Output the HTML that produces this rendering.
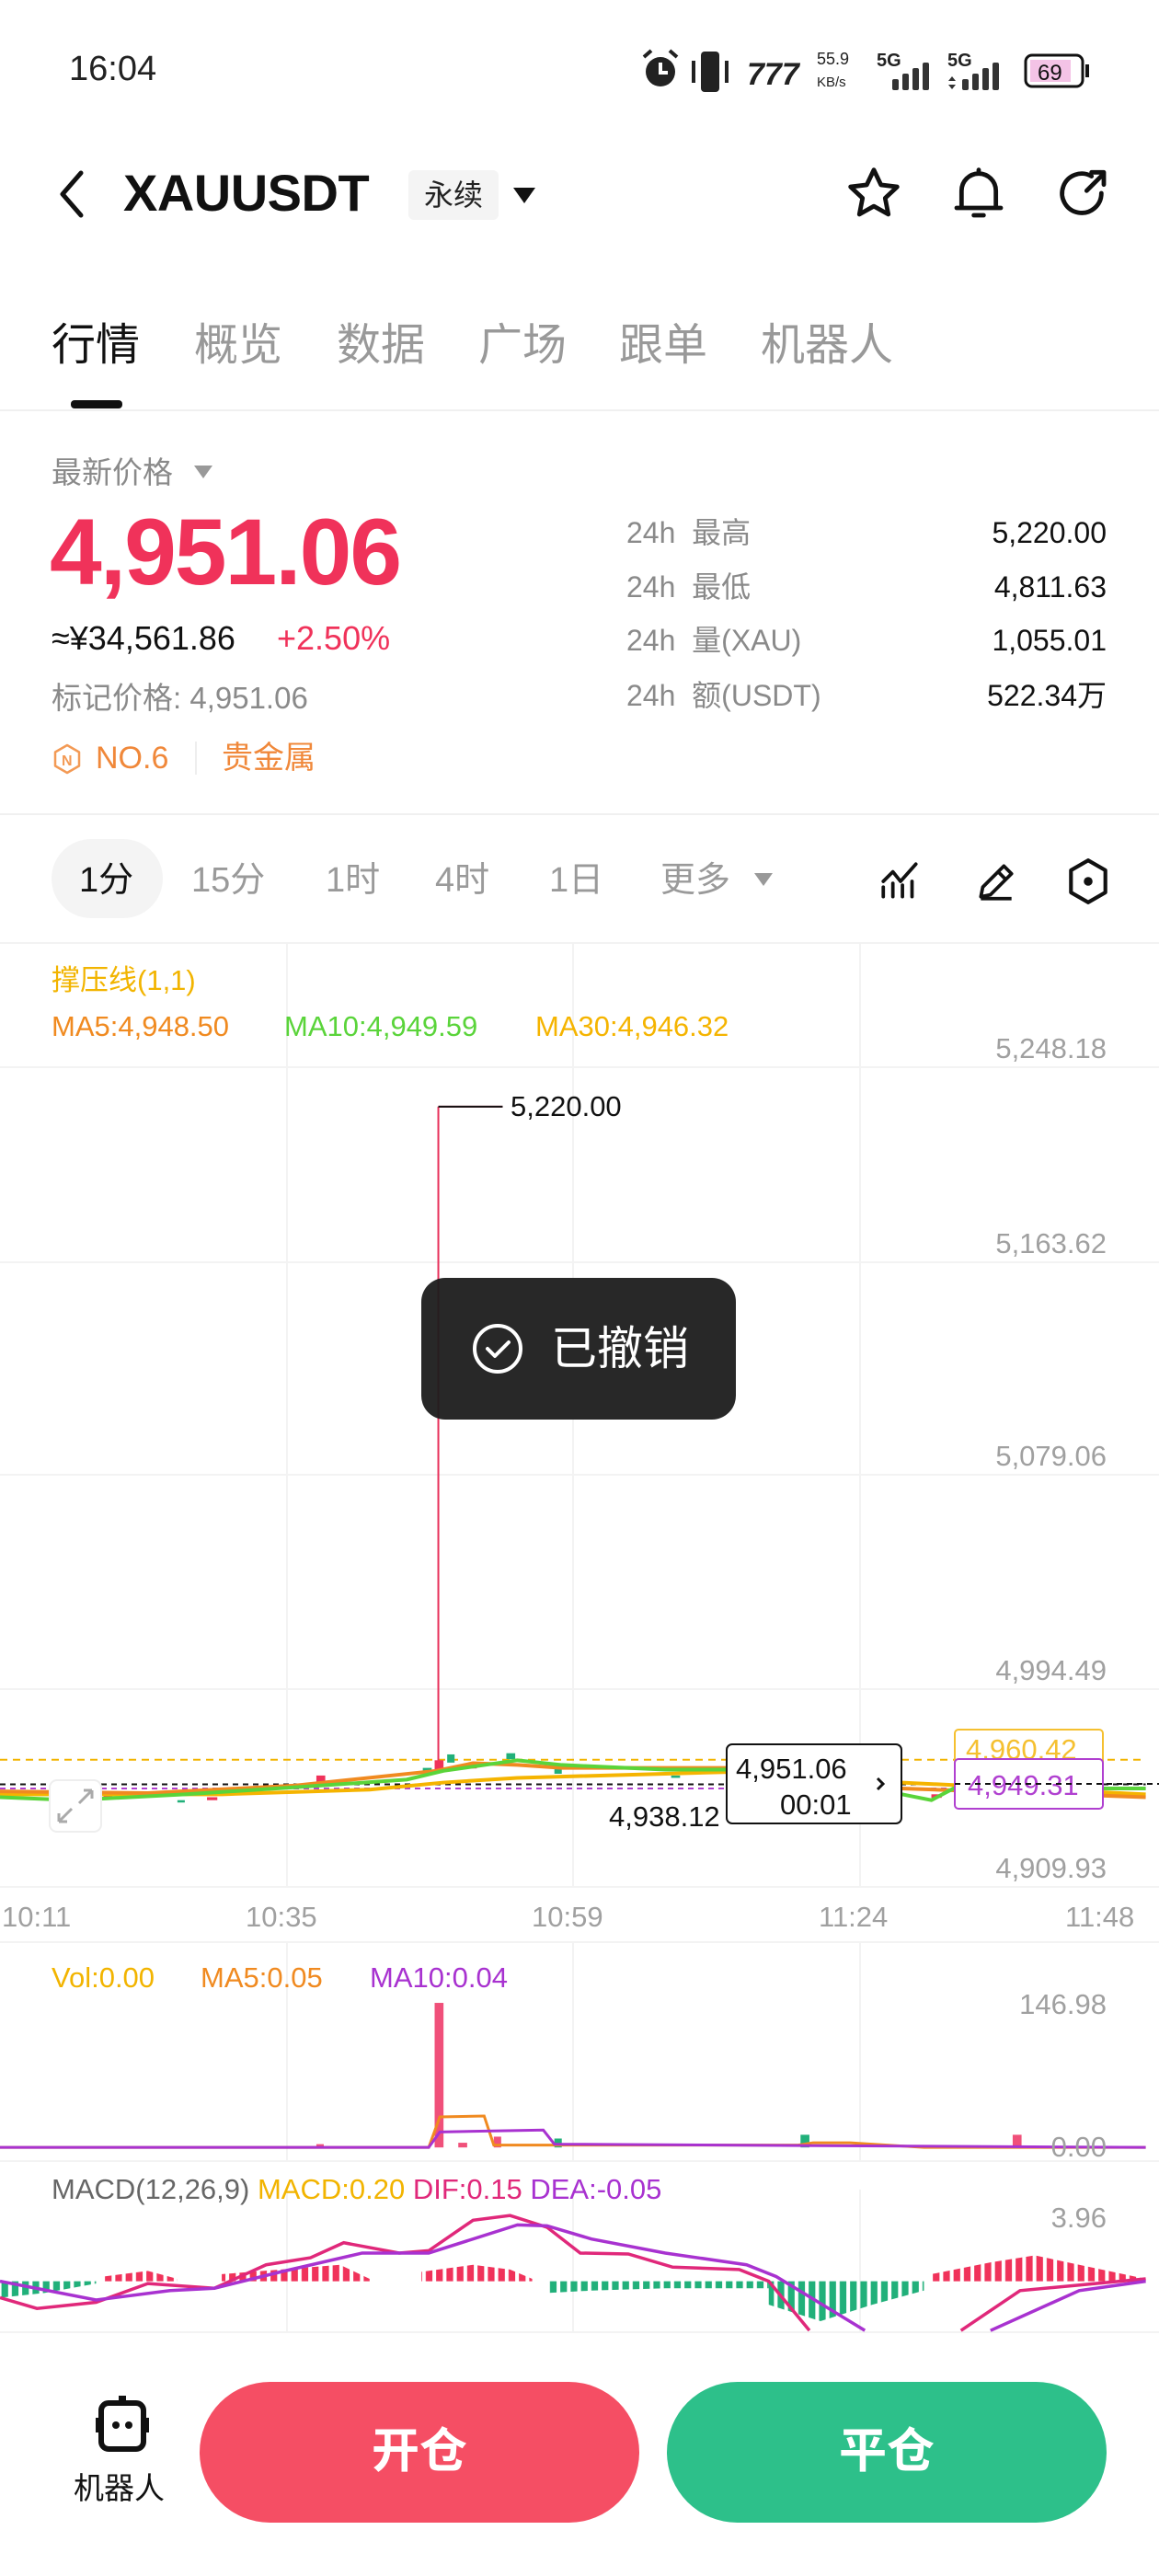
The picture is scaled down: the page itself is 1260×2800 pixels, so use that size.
<!DOCTYPE html>
<html><head><meta charset="utf-8">
<style>
*{margin:0;padding:0;box-sizing:border-box}
body{width:1260px;height:2800px;background:#fff;position:relative;overflow:hidden;font-family:"Liberation Sans","Noto Sans CJK SC",sans-serif;color:#111}
.a{position:absolute;white-space:nowrap}
.g{color:#8a8a8a}
.tab{position:absolute;top:346px;font-size:48px;color:#999;line-height:60px}
.lab{position:absolute;left:681px;font-size:32px;color:#8a8a8a;line-height:40px}
.val{position:absolute;right:57px;font-size:32px;color:#111;line-height:40px;text-align:right}
.tf{position:absolute;top:935px;font-size:38px;color:#9a9a9a;line-height:44px}
.yl{position:absolute;right:57px;font-size:31px;color:#a0a0a0;line-height:36px}
.xl{position:absolute;top:2066px;font-size:31px;color:#a0a0a0;line-height:36px}
</style></head><body>

<!-- status bar -->
<div class="a" style="left:75px;top:52px;font-size:38px;color:#222;line-height:46px">16:04</div>
<svg class="a" style="left:690px;top:50px" width="500" height="56" viewBox="690 50 500 56">
 <circle cx="718" cy="78" r="16" fill="#222"/><path d="M718 68v11h8" stroke="#fff" stroke-width="4" fill="none"/>
 <path d="M700 62l8-7M736 62l-8-7" stroke="#222" stroke-width="4"/>
 <rect x="762" y="56" width="20" height="44" rx="4" fill="#222"/><path d="M754 66v24M790 66v24" stroke="#222" stroke-width="4"/>
 <text x="812" y="92" font-family="Liberation Sans" font-style="italic" font-weight="bold" font-size="34" fill="#222">777</text>
 <text x="888" y="70" font-family="Liberation Sans" font-size="18" fill="#222">55.9</text>
 <text x="888" y="94" font-family="Liberation Sans" font-size="15" fill="#222">KB/s</text>
 <text x="953" y="72" font-family="Liberation Sans" font-weight="bold" font-size="20" fill="#222">5G</text>
 <rect x="970" y="86" width="7" height="12" rx="2" fill="#333"/><rect x="981" y="80" width="7" height="18" rx="2" fill="#333"/><rect x="992" y="74" width="7" height="24" rx="2" fill="#333"/><rect x="1003" y="68" width="7" height="30" rx="2" fill="#333"/>
 <text x="1030" y="72" font-family="Liberation Sans" font-weight="bold" font-size="20" fill="#222">5G</text>
 <path d="M1031 88l4-5 4 5zM1031 92l4 5 4-5z" fill="#333"/>
 <rect x="1046" y="86" width="7" height="12" rx="2" fill="#333"/><rect x="1057" y="80" width="7" height="18" rx="2" fill="#333"/><rect x="1068" y="74" width="7" height="24" rx="2" fill="#333"/><rect x="1079" y="68" width="7" height="30" rx="2" fill="#333"/>
 <rect x="1115" y="60" width="62" height="34" rx="7" fill="none" stroke="#111" stroke-width="3"/>
 <rect x="1120" y="65" width="44" height="24" fill="#f4c3e6"/>
 <rect x="1180" y="70" width="4" height="14" fill="#111"/>
 <text x="1128" y="87" font-family="Liberation Sans" font-size="24" fill="#111">69</text>
</svg>

<!-- header -->
<svg class="a" style="left:58px;top:182px" width="40" height="58"><path d="M30 6L10 29l20 23" stroke="#111" stroke-width="5" fill="none" stroke-linecap="round" stroke-linejoin="round"/></svg>
<div class="a" style="left:134px;top:178px;font-size:56px;font-weight:bold;line-height:64px;letter-spacing:-0.5px">XAUUSDT</div>
<div class="a" style="left:444px;top:185px;width:98px;height:54px;background:#f4f4f4;border-radius:6px;font-size:32px;line-height:54px;text-align:center;color:#222">永续</div>
<svg class="a" style="left:557px;top:203px" width="26" height="20"><path d="M1 1h24L13 18z" fill="#111"/></svg>
<svg class="a" style="left:918px;top:178px" width="64" height="64" viewBox="0 0 24 24"><path d="M12 2.5l2.9 6.1 6.6.8-4.9 4.6 1.3 6.6L12 17.3l-5.9 3.3 1.3-6.6-4.9-4.6 6.6-.8z" fill="none" stroke="#111" stroke-width="1.8" stroke-linejoin="round"/></svg>
<svg class="a" style="left:1032px;top:178px" width="64" height="64" viewBox="0 0 24 24"><path d="M5 18V11a7 7 0 0114 0v7M3 18h18M12 2.5v1.5M10 21h4" fill="none" stroke="#111" stroke-width="1.8" stroke-linecap="round"/></svg>
<svg class="a" style="left:1144px;top:178px" width="64" height="64" viewBox="0 0 24 24"><path d="M20 12a8 8 0 11-4-6.9M14 11l7-7M16 3.5h5v5" fill="none" stroke="#111" stroke-width="1.8" stroke-linecap="round" stroke-linejoin="round"/></svg>

<!-- tabs -->
<div class="tab" style="left:56px;color:#111">行情</div>
<div class="tab" style="left:211px">概览</div>
<div class="tab" style="left:366px">数据</div>
<div class="tab" style="left:520px">广场</div>
<div class="tab" style="left:673px">跟单</div>
<div class="tab" style="left:827px">机器人</div>
<div class="a" style="left:77px;top:435px;width:56px;height:9px;background:#111;border-radius:4px"></div>
<div class="a" style="left:0;top:445px;width:1260px;height:2px;background:#f0f0f0"></div>

<!-- price -->
<div class="a g" style="left:56px;top:494px;font-size:33px;line-height:40px">最新价格</div>
<svg class="a" style="left:210px;top:505px" width="22" height="16"><path d="M1 1h20L11 15z" fill="#999"/></svg>
<div class="a" style="left:54px;top:540px;font-size:102px;font-weight:bold;color:#f0325a;line-height:120px;letter-spacing:-2px">4,951.06</div>
<div class="a" style="left:56px;top:672px;font-size:36px;line-height:44px;color:#111">≈¥34,561.86</div>
<div class="a" style="left:301px;top:672px;font-size:36px;line-height:44px;color:#f0325a">+2.50%</div>
<div class="a g" style="left:56px;top:738px;font-size:33px;line-height:42px">标记价格: 4,951.06</div>
<svg class="a" style="left:57px;top:808px" width="32" height="34" viewBox="0 0 32 34"><path d="M16 2l13 7.5v15L16 32 3 24.5v-15z" fill="none" stroke="#f39a55" stroke-width="2.5" stroke-linejoin="round"/><text x="10" y="24" font-family="Liberation Sans" font-size="16" font-weight="bold" fill="#f39a55">N</text></svg>
<div class="a" style="left:104px;top:803px;font-size:34px;line-height:42px;color:#f0883a">NO.6</div>
<div class="a" style="left:212px;top:806px;width:2px;height:36px;background:#eee"></div>
<div class="a" style="left:241px;top:803px;font-size:34px;line-height:42px;color:#f0883a">贵金属</div>

<div class="lab" style="top:559px">24h&nbsp;&nbsp;最高</div><div class="val" style="top:559px">5,220.00</div>
<div class="lab" style="top:618px">24h&nbsp;&nbsp;最低</div><div class="val" style="top:618px">4,811.63</div>
<div class="lab" style="top:676px">24h&nbsp;&nbsp;量(XAU)</div><div class="val" style="top:676px">1,055.01</div>
<div class="lab" style="top:736px">24h&nbsp;&nbsp;额(USDT)</div><div class="val" style="top:736px">522.34万</div>

<div class="a" style="left:0;top:884px;width:1260px;height:2px;background:#f0f0f0"></div>

<!-- timeframes -->
<div class="a" style="left:56px;top:912px;width:121px;height:86px;background:#f4f4f4;border-radius:43px"></div>
<div class="tf" style="left:86px;color:#111">1分</div>
<div class="tf" style="left:208px">15分</div>
<div class="tf" style="left:354px">1时</div>
<div class="tf" style="left:473px">4时</div>
<div class="tf" style="left:597px">1日</div>
<div class="tf" style="left:718px">更多</div>
<svg class="a" style="left:819px;top:948px" width="22" height="16"><path d="M1 1h20L11 15z" fill="#999"/></svg>
<svg class="a" style="left:954px;top:933px" width="50" height="50" viewBox="0 0 24 24"><path d="M3 20v-5M8 20v-7M13 20v-6M18 20v-8M3 12l5-5 4 5 8-9" fill="none" stroke="#111" stroke-width="1.8" stroke-linecap="round" stroke-linejoin="round"/></svg>
<svg class="a" style="left:1058px;top:933px" width="50" height="50" viewBox="0 0 24 24"><path d="M4 20l1-5L16 4l4 4L9 19zM13 7l4 4M4 21h16" fill="none" stroke="#111" stroke-width="1.8" stroke-linejoin="round"/></svg>
<svg class="a" style="left:1158px;top:931px" width="50" height="54" viewBox="0 0 24 26"><path d="M12 2l9 5.2v11.6L12 24l-9-5.2V7.2z" fill="none" stroke="#111" stroke-width="2" stroke-linejoin="round"/><circle cx="12" cy="13" r="2.3" fill="#111"/></svg>

<div class="a" style="left:0;top:1024px;width:1260px;height:2px;background:#f2f2f2"></div>

<!-- main chart -->
<svg class="a" style="left:0;top:1000px" width="1260" height="1800" viewBox="0 1000 1260 1800">
 <g stroke="#f3f3f3" stroke-width="2">
  <path d="M312 1026V2051M623 1026V2051M935 1026V2051M312 2111V2349M623 2111V2349M935 2111V2349M312 2380V2535M623 2380V2535M935 2380V2535"/>
  <path d="M0 1160H1260M0 1372H1260M0 1603H1260M0 1836H1260M0 2051H1260M0 2111H1260M0 2349H1260M0 2535H1260"/>
 </g>
 <defs>
  <pattern id="pr" width="14" height="2000" patternUnits="userSpaceOnUse"><rect x="2" y="0" width="9" height="2000" fill="#f0325a"/></pattern>
  <pattern id="pg" width="14" height="2000" patternUnits="userSpaceOnUse"><rect x="2" y="0" width="9" height="2000" fill="#21b07a"/></pattern>
 </defs>
 <g transform="translate(0,1000) scale(0.8036,0.6378)">
  <path d="M0 1431H1550" stroke="#f2b400" stroke-width="2" stroke-dasharray="8 6" vector-effect="non-scaling-stroke" fill="none"/>
  <path d="M0 1473H1550" stroke="#111" stroke-width="2" stroke-dasharray="6 5" vector-effect="non-scaling-stroke" fill="none"/>
  <path d="M0 1480H1550" stroke="#b040d0" stroke-width="2" stroke-dasharray="6 5" vector-effect="non-scaling-stroke" fill="none"/>
  <path d="M593 318V1440M593 318H680" stroke="#e8305a" stroke-width="2" vector-effect="non-scaling-stroke" fill="none"/>
  <path d="M593 318H680" stroke="#111" stroke-width="2" vector-effect="non-scaling-stroke"/>
  <g fill="#f0325a"><rect x="428" y="1458" width="12" height="14"/><rect x="588" y="1432" width="12" height="16"/><rect x="635" y="1438" width="10" height="8"/><rect x="1260" y="1490" width="14" height="6"/><rect x="280" y="1495" width="14" height="5"/><rect x="140" y="1492" width="12" height="5"/></g>
  <g fill="#21b07a"><rect x="572" y="1445" width="12" height="12"/><rect x="605" y="1422" width="10" height="14"/><rect x="685" y="1420" width="12" height="10"/><rect x="750" y="1440" width="10" height="15"/><rect x="908" y="1458" width="12" height="4"/><rect x="240" y="1500" width="10" height="4"/></g>
  <g fill="none" stroke-width="4" vector-effect="non-scaling-stroke" stroke-linejoin="round">
   <path d="M0 1490L300 1490L500 1482L600 1470L700 1462L985 1452M1220 1470L1550 1490" stroke="#f5b400" vector-effect="non-scaling-stroke"/>
   <path d="M0 1485L200 1488L400 1475L590 1450L640 1437L700 1440L760 1445L985 1445M1220 1480L1550 1495" stroke="#f08a20" vector-effect="non-scaling-stroke"/>
   <path d="M0 1495L100 1500L250 1490L400 1478L550 1465L600 1450L700 1432L760 1440L900 1448L985 1448M1220 1490L1260 1500L1290 1480L1550 1480" stroke="#5ad43a" vector-effect="non-scaling-stroke"/>
  </g>
 </g>
 <!-- price tags -->
 <text x="555" y="1213" font-family="Liberation Sans" font-size="31" fill="#111">5,220.00</text>
 <rect x="54" y="1935" width="56" height="56" rx="8" fill="#fff" stroke="#eee" stroke-width="2"/>
 <path d="M64 1980l14-14M64 1980v-9M64 1980h9M100 1946l-14 14M100 1946v9M100 1946h-9" stroke="#aaa" stroke-width="3" fill="none"/>
 <text x="662" y="1985" font-family="Liberation Sans" font-size="31" fill="#111">4,938.12</text>
 <rect x="790" y="1896" width="190" height="86" rx="6" fill="#fff" stroke="#111" stroke-width="2"/>
 <text x="800" y="1933" font-family="Liberation Sans" font-size="31" fill="#111">4,951.06</text>
 <text x="848" y="1972" font-family="Liberation Sans" font-size="31" fill="#111">00:01</text>
 <path d="M954 1933l6 6-6 6" stroke="#111" stroke-width="3" fill="none"/>
 <rect x="1038" y="1880" width="161" height="40" rx="4" fill="#fff" stroke="#f5c030" stroke-width="2"/>
 <text x="1050" y="1912" font-family="Liberation Sans" font-size="31" fill="#f5c030">4,960.42</text>
 <rect x="1038" y="1912" width="161" height="54" rx="4" fill="#fff" stroke="#b040d0" stroke-width="2"/>
 <text x="1052" y="1951" font-family="Liberation Sans" font-size="31" fill="#b040d0">4,949.31</text>
 <path d="M1038 1939H1260" stroke="#111" stroke-width="2" stroke-dasharray="6 5"/>

 <!-- volume & macd -->
 <g transform="translate(0,2000) scale(0.8036,0.5102)">
  <rect x="588" y="347" width="12" height="308" fill="#f0507a"/>
  <rect x="428" y="648" width="10" height="7" fill="#f0507a"/><rect x="620" y="645" width="12" height="10" fill="#f0507a"/><rect x="668" y="632" width="10" height="23" fill="#f0507a"/><rect x="1370" y="628" width="12" height="27" fill="#f0507a"/>
  <rect x="1083" y="628" width="12" height="27" fill="#21b07a"/><rect x="750" y="636" width="10" height="19" fill="#21b07a"/>
  <path d="M0 655L580 655L595 590L655 588L668 650L1080 650L1100 645L1150 645L1250 655L1550 655" stroke="#f08a20" stroke-width="3" fill="none" vector-effect="non-scaling-stroke"/>
  <path d="M0 655L580 655L595 622L735 618L750 648L1550 655" stroke="#a832d0" stroke-width="3" fill="none" vector-effect="non-scaling-stroke"/>
  <!-- macd histogram -->
  <path d="M0 940V975L60 965L130 945V940Z" fill="url(#pg)"/>
  <path d="M140 940V930L200 918L240 935V940Z" fill="url(#pr)"/>
  <path d="M300 940V925L380 915L460 905L500 935V940Z" fill="url(#pr)"/>
  <path d="M570 940V920L640 905L690 915L720 935V940Z" fill="url(#pr)"/>
  <path d="M740 940V965L800 960L900 955L1040 955V940Z" fill="url(#pg)"/>
  <path d="M1040 940V990L1110 1025L1180 990L1250 960V940Z" fill="url(#pg)"/>
  <path d="M1260 940V925L1340 900L1400 885L1460 905L1550 935V940Z" fill="url(#pr)"/>
  <path d="M0 975L50 998L130 985L200 945L290 955L360 905L420 890L465 858L540 880L580 875L640 810L690 800L740 825L785 880L850 882L910 910L1000 915L1040 940L1095 1045M1300 1045L1380 960L1550 935" stroke="#e0287a" stroke-width="3.5" fill="none" vector-effect="non-scaling-stroke"/>
  <path d="M0 940L130 980L230 960L290 955L380 920L490 880L580 880L700 820L740 822L800 850L900 880L1010 905L1050 930L1170 1045M1340 1045L1460 960L1550 940" stroke="#a832d0" stroke-width="3.5" fill="none" vector-effect="non-scaling-stroke"/>
 </g>
</svg>

<div class="a" style="left:56px;top:1047px;font-size:31px;color:#f2b400;line-height:38px">撑压线(1,1)</div>
<div class="a" style="left:56px;top:1097px;font-size:31px;color:#f08a20;line-height:38px">MA5:4,948.50</div>
<div class="a" style="left:309px;top:1097px;font-size:31px;color:#5ad43a;line-height:38px">MA10:4,949.59</div>
<div class="a" style="left:582px;top:1097px;font-size:31px;color:#f5b400;line-height:38px">MA30:4,946.32</div>

<div class="yl" style="top:1122px">5,248.18</div>
<div class="yl" style="top:1334px">5,163.62</div>
<div class="yl" style="top:1565px">5,079.06</div>
<div class="yl" style="top:1798px">4,994.49</div>
<div class="yl" style="top:2013px">4,909.93</div>

<div class="xl" style="left:2px">10:11</div>
<div class="xl" style="left:267px">10:35</div>
<div class="xl" style="left:578px">10:59</div>
<div class="xl" style="left:890px">11:24</div>
<div class="xl" style="left:1158px">11:48</div>

<div class="a" style="left:56px;top:2131px;font-size:31px;color:#f2b400;line-height:38px">Vol:0.00</div>
<div class="a" style="left:218px;top:2131px;font-size:31px;color:#f08a20;line-height:38px">MA5:0.05</div>
<div class="a" style="left:402px;top:2131px;font-size:31px;color:#a832d0;line-height:38px">MA10:0.04</div>
<div class="yl" style="top:2161px">146.98</div>
<div class="yl" style="top:2316px">0.00</div>

<div class="a" style="left:56px;top:2361px;font-size:31px;color:#666;line-height:38px">MACD(12,26,9) <span style="color:#f2b400">MACD:0.20</span> <span style="color:#e0287a">DIF:0.15</span> <span style="color:#a832d0">DEA:-0.05</span></div>
<div class="yl" style="top:2393px">3.96</div>

<!-- toast -->
<div class="a" style="left:458px;top:1389px;width:342px;height:154px;background:rgba(28,28,28,0.95);border-radius:26px"></div>
<svg class="a" style="left:511px;top:1436px" width="60" height="60"><circle cx="30" cy="30" r="25" fill="none" stroke="#fff" stroke-width="4"/><path d="M19 30l8 8 15-15" stroke="#fff" stroke-width="4" fill="none" stroke-linecap="round" stroke-linejoin="round"/></svg>
<div class="a" style="left:599px;top:1436px;font-size:50px;color:#fff;line-height:60px">已撤销</div>

<!-- bottom -->
<svg class="a" style="left:100px;top:2602px" width="66" height="64" viewBox="0 0 66 64"><rect x="29" y="2" width="8" height="6" fill="#111"/><rect x="10" y="10" width="46" height="50" rx="8" fill="none" stroke="#111" stroke-width="6"/><rect x="4" y="26" width="5" height="16" fill="#111"/><rect x="57" y="26" width="5" height="16" fill="#111"/><circle cx="26" cy="34" r="4" fill="#111"/><circle cx="40" cy="34" r="4" fill="#111"/></svg>
<div class="a" style="left:80px;top:2685px;font-size:33px;line-height:40px;color:#111">机器人</div>
<div class="a" style="left:217px;top:2589px;width:478px;height:153px;border-radius:77px;background:#f54e64;color:#fff;font-size:52px;font-weight:bold;text-align:center;line-height:153px">开仓</div>
<div class="a" style="left:725px;top:2589px;width:478px;height:153px;border-radius:77px;background:#2dc08a;color:#fff;font-size:52px;font-weight:bold;text-align:center;line-height:153px">平仓</div>
</body></html>
